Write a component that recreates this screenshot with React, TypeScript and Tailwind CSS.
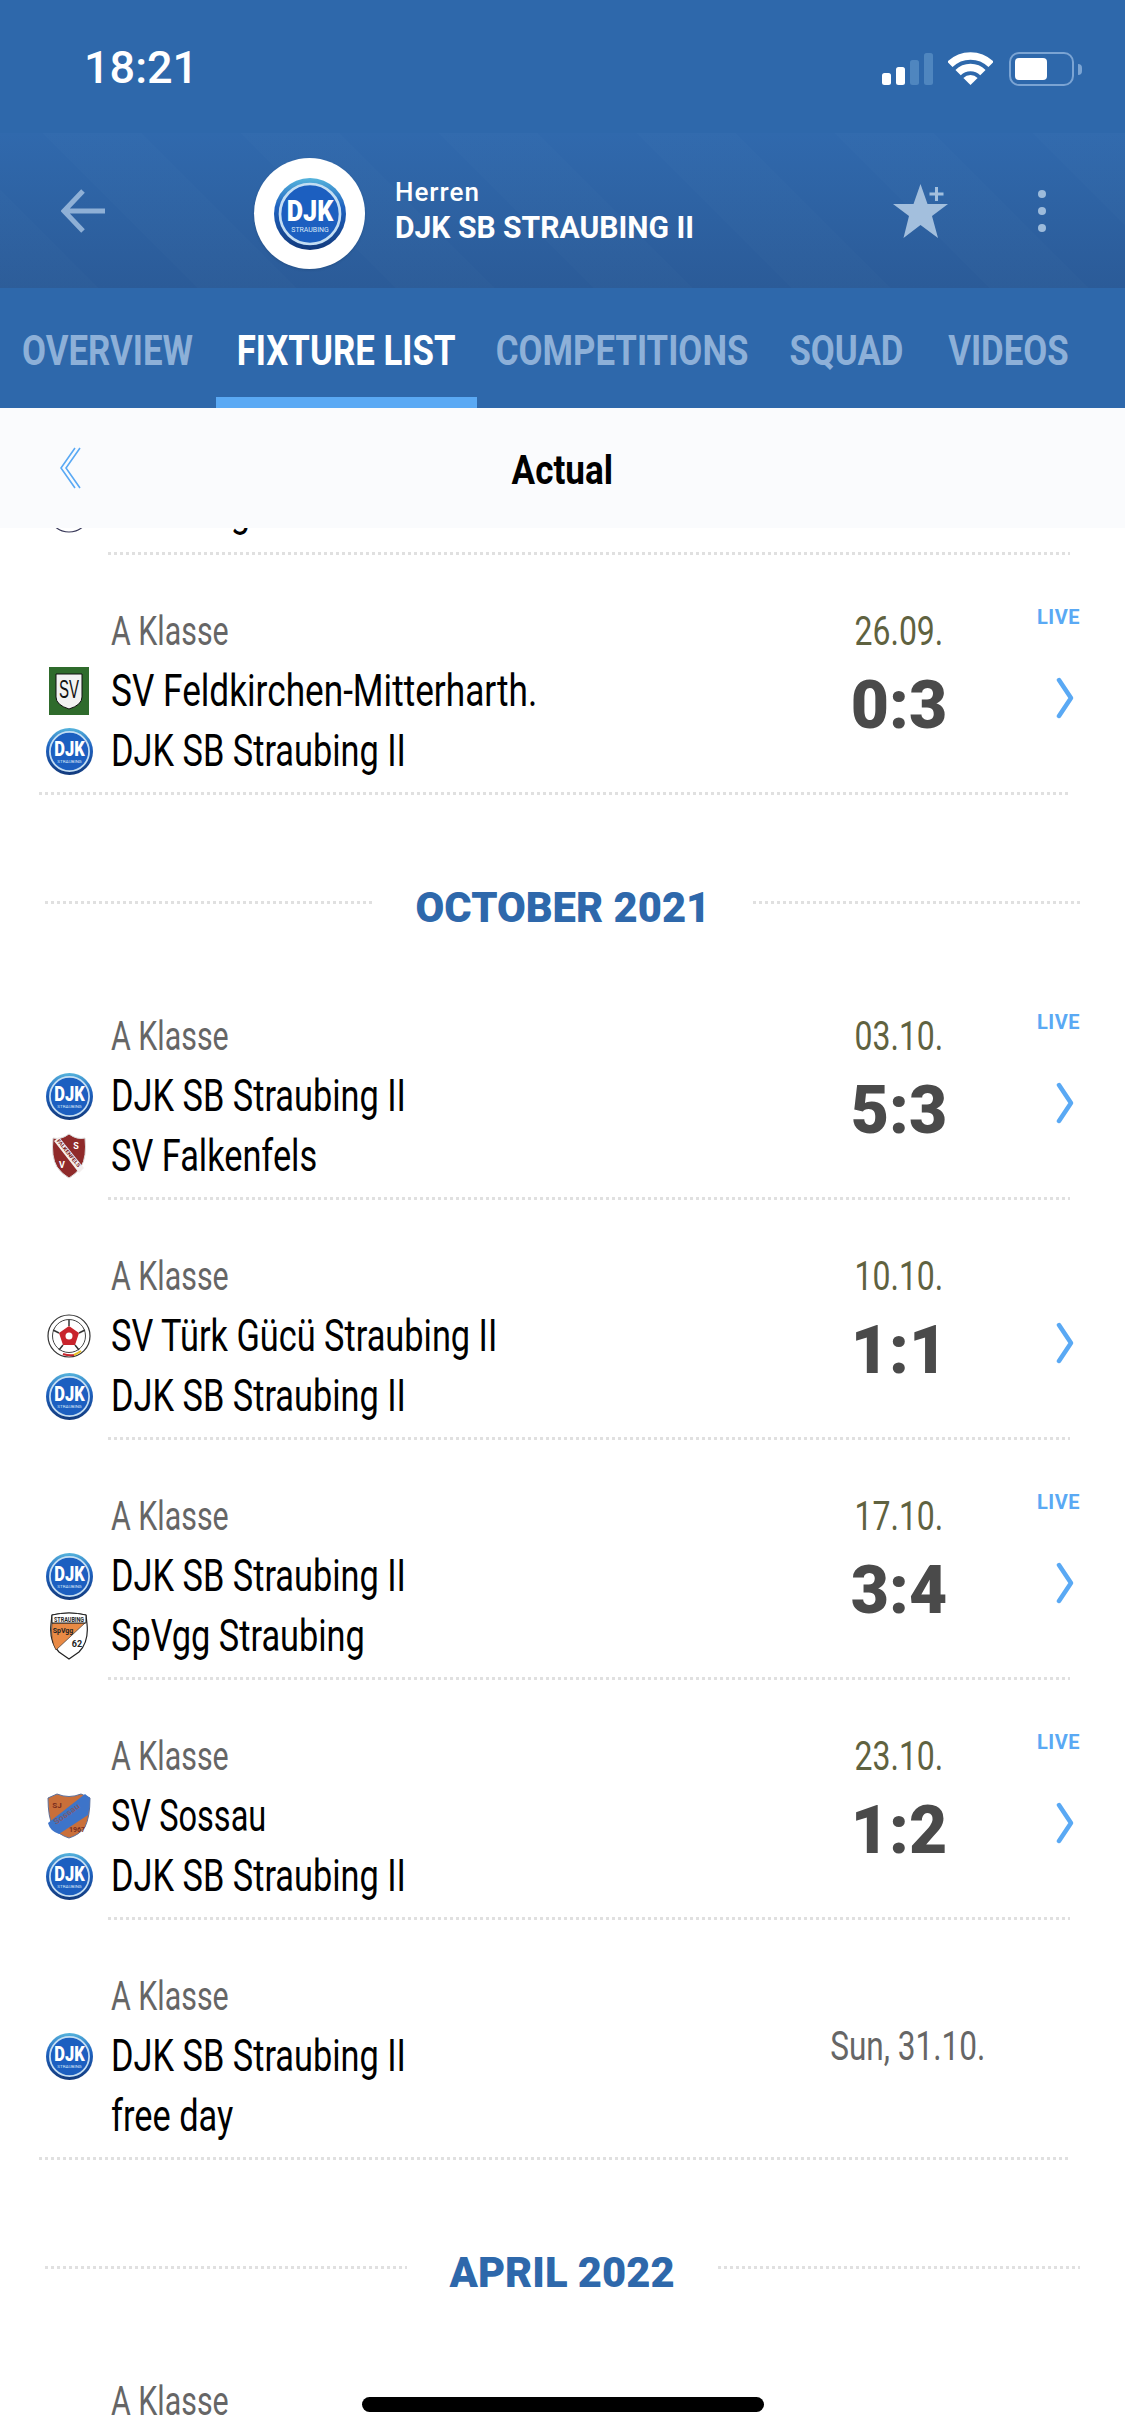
const font = "font-['Roboto',sans-serif]";

const DjkLogo = ({ size = 47 }: { size?: number }) => (
  <svg width={size} height={size} viewBox="0 0 48 48">
    <defs>
      <linearGradient id="djk" x1="0" y1="0" x2="0" y2="1">
        <stop offset="0" stopColor="#56b4dc" />
        <stop offset="0.4" stopColor="#1f62c0" />
        <stop offset="1" stopColor="#123a7c" />
      </linearGradient>
    </defs>
    <circle cx="24" cy="24" r="24" fill="url(#djk)" />
    <circle cx="24" cy="24" r="20" fill="#1c5fc0" stroke="#c4def3" strokeWidth="1.8" />
    <text x="24" y="28.5" textAnchor="middle" fill="#fff" fontSize="20" fontWeight="900" fontFamily="Roboto, sans-serif" textLength="31" lengthAdjust="spacingAndGlyphs">DJK</text>
    <text x="24" y="36" textAnchor="middle" fill="#d8e8f8" fontSize="4.5" fontFamily="Roboto, sans-serif" textLength="25" lengthAdjust="spacingAndGlyphs">STRAUBING</text>
  </svg>
);

const FeldkirchenLogo = () => (
  <svg width="40" height="48" viewBox="0 0 40 48">
    <rect width="40" height="48" fill="#2f6b2c" />
    <path d="M7 7 H33 V30 Q33 38 20 42 Q7 38 7 30 Z" fill="#f2f2f2" stroke="#111" strokeWidth="1" />
    <text x="20" y="31" textAnchor="middle" fill="#111" fontSize="26" fontFamily="Liberation Sans, sans-serif" textLength="20" lengthAdjust="spacingAndGlyphs">SV</text>
  </svg>
);

const FalkenfelsLogo = () => (
  <svg width="36" height="46" viewBox="0 0 36 46">
    <path d="M2 5 Q10 7 18 1 Q26 7 34 5 Q36 24 30 34 Q25 41 18 45 Q11 41 6 34 Q0 24 2 5 Z" fill="#8f2a2a" stroke="#ddd" strokeWidth="1" />
    <path d="M3 8 L8 4 L33 35 L28 40 Z" fill="#f3eeee" />
    <text x="0" y="0" transform="translate(5.5 8) rotate(51)" fill="#7a2020" fontSize="5" fontWeight="700" fontFamily="Roboto, sans-serif" textLength="34" lengthAdjust="spacingAndGlyphs">FALKENFELS</text>
    <text x="25" y="16" textAnchor="middle" fill="#fff" fontSize="9" fontWeight="700" fontFamily="Roboto, sans-serif">S</text>
    <text x="11" y="35" textAnchor="middle" fill="#fff" fontSize="9" fontWeight="700" fontFamily="Roboto, sans-serif">V</text>
  </svg>
);

const TurkLogo = () => (
  <svg width="44" height="44" viewBox="0 0 44 44">
    <circle cx="22" cy="22" r="21" fill="#fff" stroke="#333" strokeWidth="1.2" />
    <circle cx="22" cy="22" r="16.5" fill="#fff" stroke="#444" strokeWidth="1" />
    <path d="M22 12 L32 19 L28 31 L16 31 L12 19 Z" fill="#c8242c" />
    <path d="M22 12 L22 6 M32 19 L38 16 M28 31 L32 36 M16 31 L12 36 M12 19 L6 16" stroke="#333" strokeWidth="1.5" />
    <circle cx="22" cy="22" r="3.5" fill="#fff" />
    <path d="M16 40 Q22 42 27 41" stroke="#c8242c" strokeWidth="2" fill="none" />
    <path d="M27 41 Q31 39 34 37" stroke="#e8c020" strokeWidth="2" fill="none" />
  </svg>
);

const PlainLogo = () => (
  <svg width="44" height="46" viewBox="0 0 44 46">
    <circle cx="22" cy="23" r="21" fill="#fff" stroke="#3a3a5a" strokeWidth="1.2" />
    <path d="M20 37 Q22 41 24 37" fill="none" stroke="#3a3a5a" strokeWidth="1.2" />
  </svg>
);

const SpvggLogo = () => (
  <svg width="40" height="48" viewBox="0 0 40 48">
    <path d="M3 3 Q20 -1 37 3 L38 12 Q40 30 30 40 L20 47 L10 40 Q0 30 2 12 Z" fill="#fff" stroke="#222" strokeWidth="1.2" />
    <path d="M3 11 H36 L7 38 Q1 28 3 11 Z" fill="#e98a45" stroke="#222" strokeWidth="0.6" />
    <path d="M3 3 Q20 -1 37 3 L37 11 H3 Z" fill="#fff" stroke="#222" strokeWidth="1" />
    <text x="20" y="9.5" textAnchor="middle" fill="#222" fontSize="7" fontWeight="700" fontFamily="Roboto, sans-serif" textLength="30" lengthAdjust="spacingAndGlyphs">STRAUBING</text>
    <text x="14" y="21" textAnchor="middle" fill="#222" fontSize="7" fontWeight="700" fontFamily="Roboto, sans-serif">SpVgg</text>
    <text x="28" y="35" textAnchor="middle" fill="#222" fontSize="9" fontWeight="700" fontFamily="Roboto, sans-serif">62</text>
  </svg>
);

const SossauLogo = () => (
  <svg width="44" height="46" viewBox="0 0 44 46">
    <path d="M1 5 L10 1 Q22 6 34 1 L43 5 Q43 24 38 34 Q32 42 22 45 Q12 42 6 34 Q1 24 1 5 Z" fill="#c96f3a" stroke="#5c6f9a" strokeWidth="1" />
    <path d="M1 30 L38 1 L43 5 Q43 14 41 22 L12 41 Q3 38 1 30 Z" fill="#3d74c9" />
    <text x="0" y="0" transform="translate(9 32) rotate(-36)" fill="#7a5a70" fontSize="8" fontWeight="700" fontFamily="Roboto, sans-serif" textLength="30" lengthAdjust="spacingAndGlyphs">Sossau</text>
    <text x="10" y="15" textAnchor="middle" fill="#7a2e20" fontSize="8" fontWeight="700" fontFamily="Roboto, sans-serif">SJ</text>
    <text x="30" y="39" textAnchor="middle" fill="#7a2e20" fontSize="7" fontWeight="700" fontFamily="Roboto, sans-serif">1967</text>
  </svg>
);

const Dots = ({ className }: { className: string }) => (
  <div className={"h-[3px] bg-[repeating-linear-gradient(90deg,#e0e0e0_0_3px,transparent_3px_6px)] " + className} />
);

const djk = { name: "DJK SB Straubing II", logo: <DjkLogo /> };

type Team = { name: string; logo: any; sx?: string };

type Match = {
  home: Team;
  away: Team;
  date: string;
  score?: string;
  live?: boolean;
  wide?: boolean;
};

const TeamLine = ({ team }: { team: Team }) => (
  <div className="flex h-[60px] items-center">
    <div className="flex w-[111px] shrink-0 justify-center pl-[27px]">{team.logo}</div>
    <span className={"inline-block origin-left whitespace-nowrap text-[44px] leading-[60px] text-black " + font + " " + (team.sx || "scale-x-[0.78]")}>{team.name}</span>
  </div>
);

const League = () => (
  <span className={"inline-block origin-left scale-x-[0.74] text-[41px] leading-[60px] text-[#666] " + font}>A Klasse</span>
);

const MatchRow = ({ match }: { match: Match }) => (
  <div className="flex h-[240px] flex-col">
    <div className="flex flex-1">
      <div className="flex-1 pt-[46px]">
        <div className="h-[60px] pl-[111px]">
          <League />
        </div>
        <TeamLine team={match.home} />
        <TeamLine team={match.away} />
      </div>
      {match.score ? (
        <div className="flex w-[200px] flex-col items-center pt-[46px]">
          <div className={"h-[60px] scale-x-[0.78] text-[41px] leading-[60px] text-[#5f6240] " + font}>{match.date}</div>
          <div className={"mt-[15px] h-[60px] text-[66px] font-black leading-[60px] text-[#4a4a4a] " + font}>{match.score}</div>
        </div>
      ) : (
        <div className="flex w-[200px] items-center justify-center pl-[18px] pt-[14px]">
          <div className={"h-[60px] scale-x-[0.77] whitespace-nowrap text-[41px] leading-[60px] text-[#666] " + font}>{match.date}</div>
        </div>
      )}
      <div className="w-[126px]">
        {match.live && (
          <div className={"pl-[38px] pt-[50px] text-[20px] font-bold leading-[24px] tracking-[0.5px] text-[#5aa9f4] " + font}>LIVE</div>
        )}
        {match.score && (
          <div className={"pl-[57px] " + (match.live ? "pt-[48px]" : "pt-[122px]")}>
            <svg width="18" height="42" viewBox="0 0 18 42">
              <path d="M3 3 L15 21 L3 39" fill="none" stroke="#5aa9f4" strokeWidth="4.5" strokeLinecap="round" strokeLinejoin="round" />
            </svg>
          </div>
        )}
      </div>
    </div>
    <Dots className={match.wide ? "ml-[39px] mr-[55px]" : "ml-[108px] mr-[55px]"} />
  </div>
);

const MonthHeader = ({ label }: { label: string }) => (
  <div className="flex h-[165px] items-center px-[45px] pt-[59px]">
    <Dots className="mb-[10px] flex-1" />
    <span className={"mx-[39px] text-[43px] font-black leading-[50px] " + font}>
      <span className="inline-block scale-x-[0.97] text-[#2e68ab]">{label}</span>
    </span>
    <Dots className="mb-[10px] flex-1" />
  </div>
);

const tabs = [
  { label: "OVERVIEW", w: "w-[216px]" },
  { label: "FIXTURE LIST", w: "w-[261px]", active: true },
  { label: "COMPETITIONS", w: "w-[291px]" },
  { label: "SQUAD", w: "w-[157px]" },
  { label: "VIDEOS", w: "w-[167px]" },
];

const StatusBar = () => (
  <div className="flex h-[133px] items-start justify-between bg-[#2e68ab] pl-[84px] pr-[43px] pt-[44px]">
    <span className={"text-[45px] font-medium leading-[48px] text-white " + font}>18:21</span>
    <div className="flex items-start pt-[8px]">
      <svg className="mt-[1px]" width="51" height="32" viewBox="0 0 51 32">
        <rect x="0" y="20" width="9" height="12" rx="2.5" fill="#fff" />
        <rect x="14" y="14" width="9" height="18" rx="2.5" fill="#fff" />
        <rect x="28" y="7" width="9" height="25" rx="2.5" fill="#4f86bf" />
        <rect x="42" y="0" width="9" height="32" rx="2.5" fill="#4f86bf" />
      </svg>
      <svg className="ml-[15px]" width="45" height="33" viewBox="0 0 45 33">
        <path d="M1.9 12.4 A29.2 29.2 0 0 1 43.1 12.4" fill="none" stroke="#fff" strokeWidth="7.5" />
        <path d="M10.1 20.6 A17.5 17.5 0 0 1 34.9 20.6" fill="none" stroke="#fff" strokeWidth="7.5" />
        <path d="M22.5 33 L15.4 25.9 A10 10 0 0 1 29.6 25.9 Z" fill="#fff" />
      </svg>
      <div className="ml-[16px] flex items-center">
        <div className="h-[34px] w-[65px] rounded-[10px] border-[2px] border-[#7ba4d3] p-[4px]">
          <div className="h-full w-[32px] rounded-[4px] bg-white" />
        </div>
        <div className="ml-[4px] h-[11px] w-[4px] rounded-r-[4px] bg-[#7ba4d3]" />
      </div>
    </div>
  </div>
);

const Header = () => (
  <div className="flex h-[155px] items-center bg-[repeating-linear-gradient(45deg,rgba(255,255,255,0.012)_0_70px,transparent_70px_140px),linear-gradient(180deg,#3069ad,#2b5b98)] pl-[61px] pr-[79px]">
    <svg width="46" height="46" viewBox="0 0 46 46">
      <path d="M44 23 H5 M22 3 L3 23 L22 43" fill="none" stroke="#8fb0d6" strokeWidth="5" />
    </svg>
    <div className="ml-[147px] mt-[6px] flex h-[111px] w-[111px] items-center justify-center rounded-full bg-white shadow-sm">
      <DjkLogo size={72} />
    </div>
    <div className={"ml-[30px] flex-1 text-white " + font}>
      <div className="text-[26px] font-medium leading-[32px] tracking-[1px]">Herren</div>
      <div className="mt-[2px] origin-left scale-x-[0.97] whitespace-nowrap text-[31px] font-bold leading-[36px]">DJK SB STRAUBING II</div>
    </div>
    <svg width="55" height="54" viewBox="0 0 55 54">
      <path d="M27.5 0 L34.5 20 L55 20 L39 32 L45 54 L27.5 41 L10.5 54 L16 32 L0 20 L20.5 20 Z" fill="#a3bfdd" />
      <path d="M43.5 2.5 V17.5 M36 10 H51" stroke="#2e68ab" strokeWidth="6" />
      <path d="M43.5 3 V17 M36.5 10 H50.5" stroke="#a3bfdd" strokeWidth="3" />
    </svg>
    <div className="ml-[90px] flex flex-col gap-[9px]">
      <div className="h-[8px] w-[8px] rounded-full bg-[#9dbbdb]" />
      <div className="h-[8px] w-[8px] rounded-full bg-[#9dbbdb]" />
      <div className="h-[8px] w-[8px] rounded-full bg-[#9dbbdb]" />
    </div>
  </div>
);

const Tabs = () => (
  <div className="flex h-[120px] bg-[#2e68ab]">
    {tabs.map((tab) => (
      <div
        key={tab.label}
        className={
          "flex shrink-0 items-center justify-center whitespace-nowrap border-b-[11px] pt-[16px] text-[43px] font-bold " + font + " " + tab.w + " " +
          (tab.active ? "border-[#5aa9f4] text-white" : "border-transparent text-[#8db0d8]")
        }
      >
        <span className="inline-block scale-x-[0.81]">{tab.label}</span>
      </div>
    ))}
  </div>
);

const ActualBar = () => (
  <div className="relative z-10 flex h-[120px] items-center justify-center bg-[#fafbfd] pt-[5px]">
    <svg className="absolute left-[58px] top-[38px]" width="24" height="44" viewBox="0 0 24 44">
      <path d="M17 2 L3 22 L17 42 M22 2 L8 22 L22 42" fill="none" stroke="#5aa9f4" strokeWidth="1.6" />
    </svg>
    <span className={"inline-block scale-x-[0.855] text-[41px] font-bold text-black " + font}>Actual</span>
  </div>
);

export default function App() {
  return (
    <div className="relative flex h-[2436px] w-[1125px] flex-col overflow-hidden bg-white">
      <StatusBar />
      <Header />
      <Tabs />
      <ActualBar />
      <div className="flex-1 overflow-hidden">
        {/* the row above is scrolled away under the bar, only its last line peeks out */}
        <div className="h-[24px] overflow-hidden">
          <div className="-mt-[47px]">
            <TeamLine team={{ name: "SG Ittling", logo: <PlainLogo /> }} />
          </div>
        </div>
        <Dots className="ml-[108px] mr-[55px]" />
        <MatchRow match={{ home: { name: "SV Feldkirchen-Mitterharth.", logo: <FeldkirchenLogo />, sx: "scale-x-[0.8]" }, away: djk, date: "26.09.", score: "0:3", live: true, wide: true }} />
        <MonthHeader label="OCTOBER 2021" />
        <MatchRow match={{ home: djk, away: { name: "SV Falkenfels", logo: <FalkenfelsLogo /> }, date: "03.10.", score: "5:3", live: true }} />
        <MatchRow match={{ home: { name: "SV Türk Gücü Straubing II", logo: <TurkLogo /> }, away: djk, date: "10.10.", score: "1:1" }} />
        <MatchRow match={{ home: djk, away: { name: "SpVgg Straubing", logo: <SpvggLogo /> }, date: "17.10.", score: "3:4", live: true }} />
        <MatchRow match={{ home: { name: "SV Sossau", logo: <SossauLogo />, sx: "scale-x-[0.74]" }, away: djk, date: "23.10.", score: "1:2", live: true }} />
        <MatchRow match={{ home: djk, away: { name: "free day", logo: null }, date: "Sun, 31.10.", wide: true }} />
        <MonthHeader label="APRIL 2022" />
        <div className="pl-[111px] pt-[46px]">
          <League />
        </div>
      </div>
      <div className="absolute bottom-[24px] left-[362px] h-[15px] w-[402px] rounded-full bg-black" />
    </div>
  );
}
